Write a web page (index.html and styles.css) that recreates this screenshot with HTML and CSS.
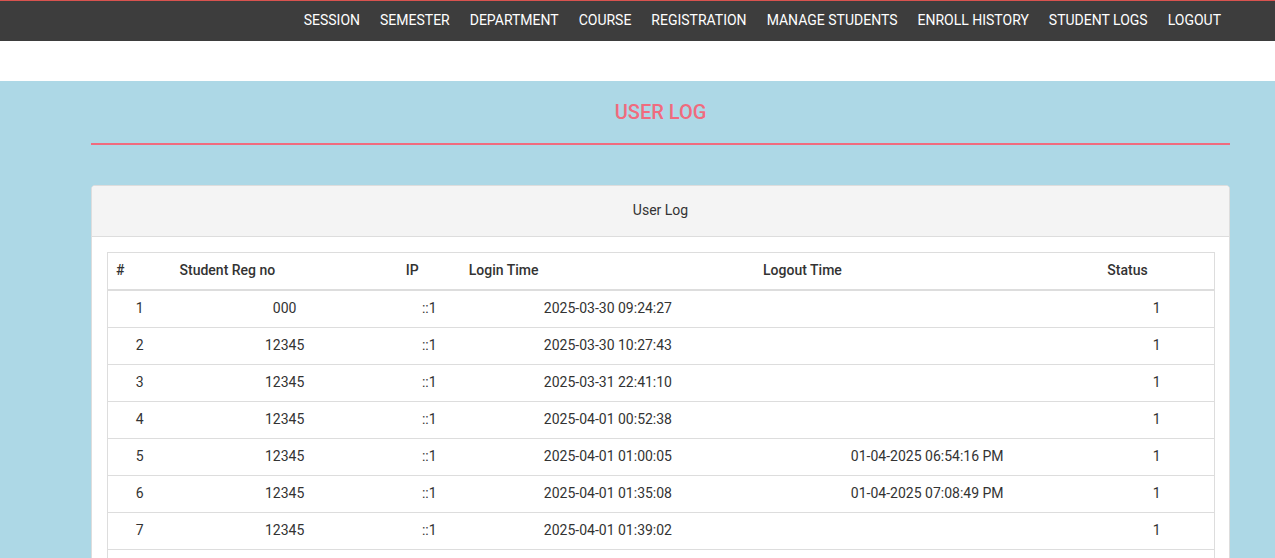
FILE: index.html
```html
<!DOCTYPE html>
<html>
<head>
<meta charset="utf-8">
<link rel="stylesheet" href="styles.css">
</head>
<body>
<header class="navbar">
  <nav class="nav-inner">
    <a class="nav-link">SESSION</a>
    <a class="nav-link">SEMESTER</a>
    <a class="nav-link">DEPARTMENT</a>
    <a class="nav-link">COURSE</a>
    <a class="nav-link">REGISTRATION</a>
    <a class="nav-link">MANAGE STUDENTS</a>
    <a class="nav-link">ENROLL HISTORY</a>
    <a class="nav-link">STUDENT LOGS</a>
    <a class="nav-link">LOGOUT</a>
  </nav>
</header>
<div class="spacer"></div>
<main class="content">
  <div class="container">
    <h1 class="page-title">USER LOG</h1>
    <div class="panel">
      <div class="panel-heading">User Log</div>
      <div class="panel-body">
        <table class="log-table">
          <colgroup>
            <col class="c1"><col class="c2"><col class="c3"><col class="c4"><col class="c5"><col class="c6">
          </colgroup>
          <thead>
            <tr><th>#</th><th>Student Reg no</th><th>IP</th><th>Login Time</th><th>Logout Time</th><th>Status</th></tr>
          </thead>
          <tbody>
            <tr><td>1</td><td>000</td><td>::1</td><td>2025-03-30 09:24:27</td><td></td><td>1</td></tr>
            <tr><td>2</td><td>12345</td><td>::1</td><td>2025-03-30 10:27:43</td><td></td><td>1</td></tr>
            <tr><td>3</td><td>12345</td><td>::1</td><td>2025-03-31 22:41:10</td><td></td><td>1</td></tr>
            <tr><td>4</td><td>12345</td><td>::1</td><td>2025-04-01 00:52:38</td><td></td><td>1</td></tr>
            <tr><td>5</td><td>12345</td><td>::1</td><td>2025-04-01 01:00:05</td><td>01-04-2025 06:54:16 PM</td><td>1</td></tr>
            <tr><td>6</td><td>12345</td><td>::1</td><td>2025-04-01 01:35:08</td><td>01-04-2025 07:08:49 PM</td><td>1</td></tr>
            <tr><td>7</td><td>12345</td><td>::1</td><td>2025-04-01 01:39:02</td><td></td><td>1</td></tr>
            <tr><td>8</td><td>12345</td><td>::1</td><td>2025-04-01 01:45:11</td><td></td><td>1</td></tr>
          </tbody>
        </table>
      </div>
    </div>
  </div>
</main>
</body>
</html>
```
FILE: styles.css
```css
* { box-sizing: border-box; }
html, body { margin: 0; padding: 0; }
body {
  font-family: Roboto, "Liberation Sans", sans-serif;
  font-size: 14px;
  line-height: 20px;
  color: #333;
  background: #add8e6;
  overflow: hidden;
}
.navbar {
  background: #3d3d3d;
  border-top: 1px solid #d9534f;
  height: 41px;
}
.nav-inner {
  display: flex;
  justify-content: flex-end;
  align-items: flex-start;
  margin: 0 44px 0 91px;
  height: 40px;
}
.nav-link {
  color: #fff;
  padding: 0 10px;
  font-size: 14px;
  line-height: 38px;
  text-decoration: none;
}
.spacer {
  height: 40px;
  background: #fff;
}
.content {
  padding-top: 1px;
}
.container {
  margin: 0 45px 0 91px;
}
.page-title {
  margin: 19px 0 0;
  text-align: center;
  font-size: 20px;
  line-height: 22px;
  font-weight: 500;
  color: #f06b7e;
  padding-bottom: 20px;
  border-bottom: 2px solid #f06b7e;
}
.panel {
  margin-top: 40px;
  background: #fff;
  border: 1px solid #ddd;
  border-radius: 4px;
}
.panel-heading {
  background: #f4f4f4;
  border-bottom: 1px solid #ddd;
  text-align: center;
  padding: 14px 15px 16px;
  border-radius: 3px 3px 0 0;
  color: #333;
}
.panel-body {
  padding: 15px;
}
.log-table {
  width: 1108px;
  border-collapse: collapse;
  table-layout: fixed;
  border: 1px solid #ddd;
}
.c1 { width: 64px; }
.c2 { width: 226px; }
.c3 { width: 63px; }
.c4 { width: 294px; }
.c5 { width: 344px; }
.c6 { width: 115px; }
.log-table th {
  text-align: left;
  font-weight: 500;
  padding: 7px 8px 9px;
  border-bottom: 2px solid #ddd;
  color: #333;
}
.log-table td {
  text-align: center;
  padding: 7px 8px 9px;
  border-bottom: 1px solid #ddd;
  color: #333;
}
```
